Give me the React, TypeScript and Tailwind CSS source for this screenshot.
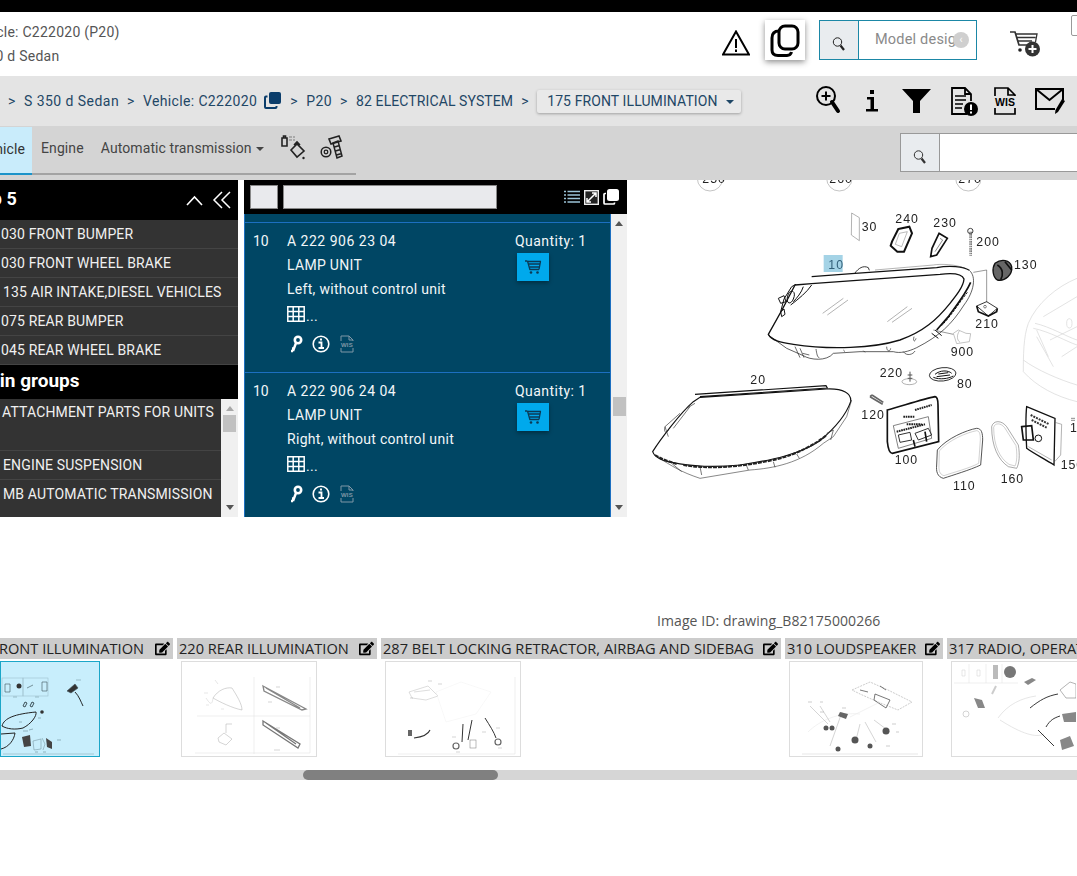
import React from "react";
import { FaEdit } from "react-icons/fa";

const Mag = ({ c = "#222" }: { c?: string }) => (
  <svg width="14" height="16" viewBox="0 0 14 16" fill="none">
    <circle cx="5.5" cy="6" r="4.2" stroke={c} strokeWidth="1" />
    <path d="M8.5 9.5 L12 14" stroke={c} strokeWidth="2.2" />
  </svg>
);

const Cart = () => (
  <svg width="18" height="16" viewBox="0 0 18 16" fill="none" stroke="#0b3a55">
    <path d="M1 2h2.5M4 2.5h13M4.5 5h11.5M5.5 8h10M6 10.5h9" strokeWidth="1.3" />
    <path d="M3.5 2l2.5 9M16.5 2.5l-1.5 8" strokeWidth="1.3" />
    <circle cx="7" cy="13.5" r="1.3" fill="#0b3a55" stroke="none" />
    <circle cx="13.5" cy="13.5" r="1.3" fill="#0b3a55" stroke="none" />
  </svg>
);

const SmallWis = () => (
  <svg width="14" height="18" viewBox="0 0 14 18" fill="none" stroke="#7f97a6" strokeWidth="1">
    <path d="M1 6V1h8l4 4v1M1 13v4h12v-4M9 1v4h4" />
    <text x="7" y="12" textAnchor="middle" fill="#7f97a6" stroke="none" fontSize="6" fontWeight="700" fontFamily="Liberation Sans, sans-serif">WIS</text>
  </svg>
);

const PartCard = ({ no, name, side }: { no: string; name: string; side: string }) => (
  <div className="h-[150px] border-t border-[#1c6fc0] flex text-[14px] text-[#f2f6f8] leading-[24px] pt-[6px]">
    <div className="w-[42px] pl-[8px]">10</div>
    <div className="w-[228px] tracking-[0.3px]">
      <div className="tracking-[0.5px]">{no}</div>
      <div>{name}</div>
      <div>{side}</div>
      <div className="flex items-center h-[26px] gap-[1px]">
        <svg width="18" height="16" viewBox="0 0 18 16" fill="none" stroke="#fff" strokeWidth="1.5">
          <path d="M.8.8h16.400v14.400H.8zM.8 5.500h16.400M.8 10.500h16.400M6.200.8v14.400M11.800.8v14.400" />
        </svg>
        <span className="leading-[14px] mt-[4px]">...</span>
      </div>
      <div className="flex items-center gap-[9px] mt-[5px] ml-[3px] h-[24px]">
        <svg width="13" height="18" viewBox="0 0 13 18" fill="none" stroke="#fff">
          <circle cx="8" cy="5" r="3.200" strokeWidth="2.600" />
          <path d="M6 8 L3 16 M3 16h-2M4 13.500h-2" strokeWidth="2.400" />
        </svg>
        <svg width="18" height="18" viewBox="0 0 18 18" fill="none" stroke="#fff">
          <circle cx="9" cy="9" r="7.800" strokeWidth="1.600" />
          <path d="M6.500 7.500h3v5M6.500 13h5.500M8 4.500h2" strokeWidth="1.800" />
        </svg>
        <span className="ml-[1px]"><SmallWis /></span>
      </div>
    </div>
    <div className="flex-1 tracking-[0.45px]">
      <div>Quantity: 1</div>
      <div className="w-[32px] h-[28px] ml-[2px] bg-[#00a9ec] flex items-center justify-center shadow-[0_2px_4px_rgba(0,0,0,0.35)]">
        <Cart />
      </div>
    </div>
  </div>
);

const Label = ({ text, w }: { text: string; w: string }) => (
  <div className={`${w} h-[21px] shrink-0 bg-[#cccccc] flex items-center justify-between pl-[2px] pr-[3px] text-[#222] text-[14.6px] whitespace-nowrap overflow-hidden`}>
    <span>{text}</span>
    <FaEdit className="w-[15px] h-[15px] shrink-0 ml-[8px] text-black" />
  </div>
);

const Row = ({ t, m, h = "h-[29px] pt-[4px]" }: { t: string; m: string; h?: string }) => (
  <div className={`${h} border-b border-[#444] flex items-start text-[14px] leading-[20px] text-[#f0f0f0] whitespace-nowrap tracking-[0.15px]`}>
    <span className={m}>{t}</span>
  </div>
);

const Diagram = () => (
  <svg width="437" height="340" viewBox="0 0 1311 1020" fill="none" stroke="#111" className="block blur-[0.3px]">
    <g stroke="#888" strokeWidth="1.5">
      <circle cx="210" cy="-5" r="38" />
      <circle cx="598" cy="-5" r="38" />
      <circle cx="985" cy="-5" r="38" />
    </g>
    <rect x="551" y="225" width="57" height="51" fill="#a4d3e6" stroke="none" />
    <g stroke="#d4d4d4" strokeWidth="2">
      <path d="M1311 295 C1250 320 1190 370 1165 430 C1150 470 1150 530 1150 575 C1190 620 1250 650 1311 665" />
      <path d="M1185 430 C1230 440 1280 470 1311 480 M1180 445 C1230 455 1280 485 1311 495 M1190 470 L1240 560 M1150 540 C1190 570 1260 600 1311 615 M1230 480 L1311 440 M1265 530 L1311 500 M1210 410 L1311 350 M1190 450 L1225 530" />
      <ellipse cx="1288" cy="430" rx="8" ry="14" />
    </g>
    {/* lamp 10, drawn in crop coordinates */}
    <g transform="translate(360 75)">
      <path d="M155 215 L285 205 L530 188 C570 180 610 185 628 196" strokeWidth="3.500" />
      <path d="M285 204 C295 190 310 180 325 188 L328 196" strokeWidth="2.500" />
      <path d="M345 195 L520 180 C540 176 590 178 615 190" strokeWidth="1.200" stroke="#444" />
      <path d="M105 240 L155 236 L540 208 C580 203 606 206 612 222 C610 245 590 270 570 295 C530 345 490 380 420 405 C340 430 210 435 100 418 C70 413 35 408 25 388 C50 345 80 290 105 240Z" strokeWidth="4" />
      <path d="M628 196 C650 215 642 260 612 300 C575 358 540 392 470 428 C445 440 420 446 400 440 L300 440 L220 445 C200 470 150 465 130 452 L80 430 L25 390" strokeWidth="2" />
      <path d="M108 238 L95 245 L72 282 L62 320 M88 262 C100 252 108 265 100 282 C95 295 85 298 82 288 C80 278 84 268 88 262Z M155 240 C140 262 118 280 92 300 M130 245 C125 262 110 280 100 290" strokeWidth="3" />
      <path d="M55 280 L72 272 L78 290 L62 295Z M62 320 L72 312 L75 328 L65 335Z" strokeWidth="3" />
      <path d="M188 325 L250 280 M202 330 L264 285 M382 350 L442 305 M396 352 L456 310" stroke="#666" strokeWidth="1.500" />
      <path d="M632 232 C615 270 590 300 565 335 L530 375" strokeWidth="5" />
      <path d="M622 262 C600 290 575 330 545 362" strokeWidth="3" strokeDasharray="8 3" />
      <path d="M525 375 L545 392 M515 385 L535 400" strokeWidth="3" />
      <path d="M168 432 C170 445 172 458 178 458 M250 435 L255 440 M310 437 L315 442 M380 425 C380 440 390 442 392 430 M462 395 C458 410 465 412 468 400 M430 440 C440 455 460 448 465 438 M105 425 L120 458 M120 430 L132 458 M128 445 L148 450" strokeWidth="2" stroke="#222" />
      <path d="M640 202 L680 195 L680 292 M520 375 L580 388" strokeWidth="1.500" stroke="#333" />
      <path d="M275 24 L298 38 V107 L274 90Z" stroke="#666" strokeWidth="1.500" />
      <path d="M415 72 L448 65 L456 85 L432 140 L412 140 L392 122 L396 110Z" strokeWidth="6" />
      <path d="M418 85 L442 80 L425 125 L406 118Z" stroke="#777" strokeWidth="1.500" />
      <path d="M537 85 L562 100 L530 150 L512 155 L516 130Z" strokeWidth="5" />
      <path d="M540 100 L548 105 L525 140" stroke="#555" strokeWidth="2" />
      <path d="M632 80 V152" strokeWidth="7" stroke="#555" strokeDasharray="5 2" />
      <path d="M632 80 V152" strokeWidth="1.500" stroke="#fff" />
      <circle cx="631" cy="78" r="8" strokeWidth="3" stroke="#444" />
      <path d="M705 175 C725 160 750 165 755 185 C758 210 735 230 712 225 C698 215 695 190 705 175Z" strokeWidth="4" fill="#666" />
      <path d="M712 180 C730 190 730 212 722 224 M735 170 L755 195" strokeWidth="5" />
      <path d="M650 303 L680 290 L712 310 L685 333 Z" strokeWidth="2.500" />
      <path d="M650 303 L655 320 L685 333 L710 320 L712 310" strokeWidth="5" />
      <circle cx="675" cy="305" r="4" strokeWidth="1.500" />
      <path d="M580 385 L595 375 L618 385 L632 386 L628 410 L590 416Z M598 378 C590 390 590 405 600 412" stroke="#888" strokeWidth="1.500" />
    </g>
    <path d="M810 575 V605 M803 585 H817 M803 595 H817" strokeWidth="3" stroke="#555" />
    <ellipse cx="808" cy="605" rx="22" ry="9" stroke="#666" strokeWidth="1.500" />
    <ellipse cx="908" cy="583" rx="40" ry="20" strokeWidth="2.500" transform="rotate(-6 908 583)" />
    <path d="M885 583 C900 570 925 570 935 580 M880 592 C900 600 925 596 940 588 M895 582 L925 578 M890 590 L930 585" strokeWidth="3" />
    {/* lamp 20 */}
    <g>
      <path d="M165 643 L558 617 L562 624 L180 650" strokeWidth="3.500" />
      <path d="M38 815 C60 780 120 700 160 665 L180 652 L560 627 C610 625 635 640 632 665 C620 700 590 740 540 782 C480 822 400 840 300 855 C230 862 150 860 100 848 C70 842 45 835 38 815Z" strokeWidth="3.500" />
      <path d="M45 825 C60 835 80 842 110 852 M130 855 C200 868 300 862 400 840 C470 825 530 790 560 765" strokeWidth="6" strokeDasharray="12 3" stroke="#222" />
      <path d="M50 830 C100 860 120 875 180 895 L330 870 C400 865 480 850 550 790 L580 770 L620 710 L635 660" strokeWidth="1.500" />
      <path d="M75 740 L85 770 M120 700 L75 740 M150 680 L100 745 M140 685 L165 670 M560 760 L580 750 L572 780 M400 845 L405 862 M470 822 L478 835 M320 858 L325 870 M180 860 L185 885 M95 850 L125 875 M75 740 C70 760 80 760 85 750" strokeWidth="2" stroke="#333" />
    </g>
    {/* units, in crop coordinates */}
    <g transform="translate(660 615)">
      <path d="M30 35 L68 58 M36 30 L70 52 M30 35 L36 30" strokeWidth="5" stroke="#666" />
      <path d="M82 75 C120 65 190 42 225 35 C232 36 234 45 234 60 L236 170 L97 205 C88 205 84 190 82 170Z" strokeWidth="5" fill="#fff" />
      <path d="M100 122 L205 95 L215 160 L115 190Z" stroke="#444" strokeWidth="2" />
      <path d="M130 95 H165 M140 118 H185 M165 75 L215 60 M110 140 L195 118" strokeWidth="6" stroke="#222" strokeDasharray="5 2" />
      <path d="M115 150 L150 142 L155 165 L120 172Z M165 145 L205 130 L215 150 L175 165Z" strokeWidth="3" stroke="#333" />
      <path d="M160 165 L165 185 M195 140 L200 170" strokeWidth="5" />
      <path d="M232 195 C260 160 320 135 350 130 C365 130 368 145 368 165 L362 240 C330 255 280 270 250 280 C232 275 228 260 230 240Z" strokeWidth="2.500" stroke="#333" />
      <path d="M238 198 C265 165 322 142 350 137 C360 138 361 150 361 165 L356 235 C328 250 280 262 252 272 C238 268 236 255 237 240Z" strokeWidth="1" stroke="#777" />
      <path d="M395 125 C400 105 425 105 440 125 L475 180 C480 210 478 235 470 250 L445 245 C415 225 395 185 395 125Z" stroke="#555" strokeWidth="1.500" />
      <path d="M401 127 C405 113 422 113 434 128 L468 182 C472 208 471 230 465 243 L447 238 C420 220 401 183 401 127Z" stroke="#888" strokeWidth="1.200" />
      <path d="M500 65 L585 100 L582 240 C550 220 520 205 500 190 C498 150 496 100 500 65Z" strokeWidth="4" fill="#fff" />
      <path d="M585 112 L605 118 L602 210 L584 230" stroke="#666" strokeWidth="1.500" />
      <path d="M512 90 L568 118 M515 105 L560 128" strokeWidth="6" strokeDasharray="6 3" stroke="#333" />
      <path d="M485 125 L515 122 L520 165 L490 165Z" strokeWidth="5" />
      <circle cx="535" cy="160" r="10" strokeWidth="3" />
      <path d="M505 185 L575 225" stroke="#666" strokeWidth="1.500" />
      <path d="M633 100 H645 M633 106 H645" stroke="#555" strokeWidth="2" />
    </g>
    <g fill="#222" stroke="none" fontFamily="'Liberation Sans', sans-serif" fontSize="37" letterSpacing="3">
      <text x="665" y="152">30</text>
      <text x="766" y="128">240</text>
      <text x="880" y="140">230</text>
      <text x="1009" y="198">200</text>
      <text x="1122" y="266">130</text>
      <text x="565" y="267" fill="#33617a">10</text>
      <text x="1006" y="443">210</text>
      <text x="932" y="527">900</text>
      <text x="331" y="613">20</text>
      <text x="719" y="592">220</text>
      <text x="951" y="623">80</text>
      <text x="664" y="717">120</text>
      <text x="764" y="851">100</text>
      <text x="939" y="930">110</text>
      <text x="1082" y="908">160</text>
      <text x="1262" y="866">150</text>
      <text x="1290" y="757">1</text>
      <text x="187" y="8">250</text>
      <text x="568" y="8">260</text>
      <text x="955" y="8">270</text>
    </g>
  </svg>
);

const Thumb1 = () => (
  <svg width="98" height="94" viewBox="0 0 98 94" fill="none" stroke="#3c5058" strokeWidth="0.6" className="block blur-[0.3px]">
    <rect x="1" y="16" width="21" height="18" stroke="#9fc0cc" />
    <rect x="22" y="16" width="25" height="18" stroke="#9fc0cc" />
    <path d="M4 22h5v8H4zM26 26l6-3M41 20h5v9h-5z" />
    <circle cx="18" cy="24" r="2.500" fill="#333" stroke="none" />
    <path d="M66 29 L74 22 L77 26 L70 31Z" fill="#333" />
    <path d="M74 30 C78 34 80 40 82 44" stroke="#111" strokeWidth="0.9" />
    <path d="M75 18h5M12 35h4M34 35h4" stroke="#7a9aa6" />
    <path d="M1 64 C3 56 14 52 35 50 C36 54 30 62 22 66 C14 68 6 67 1 64Z" strokeWidth="1" stroke="#222" />
    <path d="M22 44l2-4 2 1-2 4zM29 44l2-4 2 1-2 4z" strokeWidth="1" />
    <circle cx="41" cy="50" r="1.800" fill="#333" stroke="none" />
    <path d="M0 72 L14 71 C13 78 8 85 0 87" strokeWidth="1" stroke="#222" />
    <path d="M21 75 L29 73 L30 84 L23 85Z" fill="#444" stroke="none" />
    <path d="M45 76 L51 80 L51 87 L46 85Z" fill="#444" stroke="none" />
    <path d="M32 79 L40 77 L40 87 L33 88Z M41 76 L44 82 L42 88" stroke="#7a9aa6" />
    <path d="M22 69h5M28 68l4-1M18 60h3M37 56h3M56 78h4M34 90h3M42 90h3" stroke="#6a8a96" />
    <path d="M2 92 H93" stroke="#8fb0bb" strokeWidth="0.600" />
  </svg>
);

const Thumb2 = () => (
  <svg width="134" height="94" viewBox="0 0 134 94" fill="none" stroke="#888" strokeWidth="0.5" className="block blur-[0.3px]">
    <path d="M72 15 V92 M15 54 H128 M13 91 H128 M128 15 V91" stroke="#ddd" />
    <path d="M31 36 C36 28 44 25 50 26 C55 34 60 42 60 48 C50 46 38 40 31 36Z" stroke="#aaa" />
    <path d="M24 36 C28 42 30 44 31 36M33 18 l3 4M22 31h4M24 43h3M39 47h3" stroke="#ccc" />
    <path d="M81 24 L124 47 L120 48 L82 29Z M84 26 L118 46" strokeWidth="1.300" stroke="#888" />
    <path d="M81 59 L118 82 L116 86 L81 63Z M84 61 L114 82" strokeWidth="1.300" stroke="#777" />
    <path d="M36 76 L42 71 L50 77 L44 83 L37 80Z M44 62 V71 M44 62 h6" stroke="#aaa" />
    <path d="M94 25h4M86 40h4M94 66h4M92 88h6" stroke="#aaa" />
  </svg>
);

const Thumb3 = () => (
  <svg width="134" height="94" viewBox="0 0 134 94" fill="none" stroke="#888" strokeWidth="0.5" className="block blur-[0.3px]">
    <path d="M12 92 H129 M129 15 V92" stroke="#ddd" />
    <path d="M23 30 L42 24 L52 34 L40 38 L26 36Z M28 30 L44 28" stroke="#bbb" />
    <path d="M42 19h4M52 22h4M24 36h3" stroke="#aaa" />
    <path d="M50 30 L75 20 L105 30 L90 52 L60 60Z" stroke="#f0f0f0" />
    <rect x="22" y="68" width="4" height="6" fill="#666" stroke="none" />
    <path d="M28 76 C36 75 42 73 44 68" stroke="#333" strokeWidth="1.100" />
    <path d="M77 62 L76 80 M86 58 L82 78 M99 56 C104 64 108 70 110 76" stroke="#333" strokeWidth="1" />
    <circle cx="70" cy="84" r="3" stroke="#666" strokeWidth="1.200" />
    <rect x="84" y="78" width="6" height="8" stroke="#777" />
    <circle cx="112" cy="80" r="3" stroke="#666" strokeWidth="1.200" />
    <path d="M66 75h4M96 70h4M110 66h4M112 86h4M70 90h4" stroke="#aaa" />
  </svg>
);

const Thumb4 = () => (
  <svg width="132" height="94" viewBox="0 0 132 94" fill="none" stroke="#777" strokeWidth="0.5" className="block blur-[0.3px]">
    <path d="M12 92 H128" stroke="#ccc" />
    <path d="M62 28 L80 20 L98 28 L122 40 L108 48 L88 40 L70 32Z" stroke="#999" strokeDasharray="2 1" />
    <path d="M85 32 L100 38 L96 46 L84 38Z M70 28 L78 30 M90 24 L96 28" stroke="#555" strokeWidth="0.800" />
    <path d="M18 70 C30 58 50 50 70 52 M90 40 L60 55" stroke="#e4e4e4" />
    <path d="M20 44 L38 62 M30 44 L40 60 M52 50 L40 84 M70 62 L66 78 M75 60 L86 80 M100 70 L84 58" stroke="#aaa" />
    <circle cx="36" cy="66" r="2.500" fill="#555" stroke="none" />
    <circle cx="42" cy="66" r="2.500" fill="#555" stroke="none" />
    <circle cx="65" cy="78" r="3.500" fill="#555" stroke="none" />
    <circle cx="80" cy="84" r="2.500" fill="#555" stroke="none" />
    <circle cx="48" cy="87" r="2.500" fill="#555" stroke="none" />
    <circle cx="96" cy="69" r="3.500" fill="#555" stroke="none" />
    <path d="M50 50 L58 52 L56 57 L48 54Z" fill="#666" stroke="none" />
    <path d="M18 40h4M30 40h3M102 62h4M106 70h3M30 50h4M52 46h4M96 84h4" stroke="#999" />
  </svg>
);

const Thumb5 = () => (
  <svg width="124" height="94" viewBox="0 0 124 94" fill="none" stroke="#888" strokeWidth="0.5" className="block blur-[0.3px]">
    <path d="M2 21 H66 M17 2 V21 M34 2 V21 M50 2 V21" stroke="#ddd" />
    <path d="M10 8h3v6h-3zM25 8h3v6h-3z" stroke="#ccc" />
    <rect x="41" y="3" width="5" height="14" fill="#bbb" stroke="none" />
    <circle cx="58" cy="10" r="6" fill="#777" stroke="none" />
    <path d="M22 36 L30 38 L33 46 L26 46Z" fill="#888" stroke="none" />
    <circle cx="14" cy="52" r="3" stroke="#aaa" />
    <path d="M46 56 C56 42 70 36 84 34 M48 58 C70 72 84 76 92 72" stroke="#ccc" />
    <path d="M78 46 C88 38 95 34 106 32" stroke="#222" strokeWidth="0.900" />
    <path d="M108 28 L118 20 L124 22 L124 36 L114 36Z" stroke="#666" />
    <path d="M94 65 C98 58 102 56 108 54" stroke="#222" strokeWidth="0.900" />
    <path d="M86 68 L102 84" stroke="#222" strokeWidth="0.900" />
    <path d="M110 52 L124 50 V60 L112 60Z" fill="#888" stroke="none" />
    <path d="M108 78 L118 74 L122 84 L110 88Z" fill="#888" stroke="none" />
    <path d="M72 20 L80 16 L84 18 L76 23Z" fill="#888" stroke="none" />
    <path d="M40 32 l4 -8" stroke="#ccc" strokeWidth="2" />
  </svg>
);

export default function App() {
  return (
    <div className="w-[1077px] h-[876px] overflow-hidden bg-white flex flex-col font-['Roboto',sans-serif]">
      <div className="h-[12px] bg-black shrink-0" />
      {/* header */}
      <div className="h-[64px] shrink-0 flex bg-white overflow-hidden">
        <div className="w-[722px] shrink-0 pt-[8px] text-[14px] leading-[24px] text-[#555] whitespace-nowrap tracking-[0.25px] overflow-hidden">
          <div className="-ml-[32px]">Vehicle: C222020 (P20)</div>
          <div className="-ml-[33px]">S 350 d Sedan</div>
        </div>
        <svg width="28" height="26" viewBox="0 0 28 26" fill="none" className="mt-[18px] shrink-0">
          <path d="M14 1.500 L27 24.500 H1Z" stroke="#000" strokeWidth="2" strokeLinejoin="miter" />
          <path d="M14 9 V18 M14 19.500 V22" stroke="#000" strokeWidth="2" />
        </svg>
        <div className="ml-[15px] mt-[8px] w-[40px] h-[40px] shrink-0 bg-white shadow-[0_2px_6px_rgba(0,0,0,0.45)] flex items-center justify-center">
          <svg width="30" height="33" viewBox="0 0 30 33" fill="none" stroke="#000" strokeWidth="3">
            <rect x="9" y="2" width="19" height="23" rx="6" />
            <path d="M9 7 C4 7 2 10 2 14 V26 C2 30 4 31.500 8 31.500 H17 C20 31.500 21 30 21.500 28" />
          </svg>
        </div>
        <div className="ml-[14px] mt-[8px] w-[158px] h-[40px] shrink-0 border border-[#1b87a6] flex items-stretch">
          <div className="w-[39px] border-r border-[#1b87a6] bg-[#e9ecef] flex items-center justify-center pt-[8px]"><Mag /></div>
          <div className="flex-1 relative overflow-hidden pl-[16px] flex items-center text-[14.5px] text-[#8a8a8a] whitespace-nowrap tracking-[0.2px]">
            Model desig
            <span className="absolute left-[94px] top-[11px] w-[16px] h-[16px] rounded-full bg-[#cfcfcf] flex items-center justify-center text-white text-[10px] leading-none">‹</span>
          </div>
        </div>
        <svg width="31" height="26" viewBox="0 0 31 26" fill="none" className="ml-[33px] mt-[19px] shrink-0" stroke="#333">
          <path d="M0 1h5l4 13h12" strokeWidth="1.700" />
          <path d="M5 3h22l-1.500 8M6.500 6.500h19M8 10h14" strokeWidth="1.300" />
          <circle cx="10" cy="19" r="1.800" fill="#222" stroke="none" />
          <circle cx="22.500" cy="18" r="7.500" fill="#333" stroke="none" />
          <path d="M22.500 14v8M18.500 18h8" stroke="#fff" strokeWidth="2" />
        </svg>
        <div className="ml-[30px] mt-[3px] w-[12px] h-[21px] shrink-0 border border-[#999] rounded-[2px] bg-white" />
      </div>
      {/* breadcrumb */}
      <div className="h-[50px] shrink-0 bg-[#e4e4e4] flex items-center text-[14px] text-[#1f4766] whitespace-nowrap tracking-[0.45px]">
        <span className="ml-[8px] w-[16px]">&gt;</span>
        <span>S 350 d Sedan</span>
        <span className="ml-[8px] w-[16px]">&gt;</span>
        <span className="tracking-[0.35px]">Vehicle: C222020</span>
        <svg width="17" height="17" viewBox="0 0 17 17" className="ml-[7px] mb-[1px] shrink-0">
          <rect x="5" y="0" width="12" height="12" rx="2" fill="#0b3d6b" />
          <path d="M3.500 4.500 H2 A1 1 0 0 0 1 5.500 V15 A1 1 0 0 0 2 16 H11.500 A1 1 0 0 0 12.500 15 V14" fill="none" stroke="#0b3d6b" strokeWidth="2" />
        </svg>
        <span className="ml-[9px] w-[16px]">&gt;</span>
        <span>P20</span>
        <span className="ml-[8px] w-[16px]">&gt;</span>
        <span className="tracking-[0.1px]">82 ELECTRICAL SYSTEM</span>
        <span className="ml-[8px] w-[16px]">&gt;</span>
        <div className="h-[23px] w-[204px] shrink-0 bg-[#e9e9e9] rounded-[2px] shadow-[0_1px_3px_rgba(0,0,0,0.3)] flex items-center pl-[10px] mt-[1px] tracking-[0.1px]">
          <span>175 FRONT ILLUMINATION</span>
          <span className="ml-[8px] border-x-[4px] border-x-transparent border-t-[4px] border-t-[#1f4766]" />
        </div>
        <svg width="26" height="30" viewBox="0 0 26 30" fill="none" stroke="#000" className="ml-[74px] mb-[2px] shrink-0">
          <circle cx="11" cy="11" r="9" strokeWidth="2" />
          <path d="M11 6.500v9M6.500 11h9" strokeWidth="2" />
          <path d="M17 17 L23 26" strokeWidth="4" strokeLinecap="round" />
        </svg>
        <svg width="12" height="22" viewBox="0 0 12 22" fill="#000" className="ml-[25px] shrink-0">
          <rect x="4" y="0" width="4" height="4" />
          <path d="M1 7h7v12h4v2.500H0V19h4.500V9.500H1Z" />
        </svg>
        <svg width="29" height="25" viewBox="0 0 29 25" fill="#000" className="ml-[24px] shrink-0">
          <path d="M0 0h29L18 12v12h-7V12Z" />
        </svg>
        <svg width="27" height="29" viewBox="0 0 27 29" fill="none" stroke="#000" className="ml-[20px] shrink-0">
          <path d="M16 27H1V1h13l6 6v7M14 1v6h6" strokeWidth="1.800" />
          <path d="M4 9h11M4 13h11M4 17h8M4 21h7" strokeWidth="1.500" />
          <circle cx="20" cy="22" r="7" fill="#000" stroke="none" />
          <path d="M20 17.500v5.500M20 24.500v2" stroke="#fff" strokeWidth="2" />
        </svg>
        <svg width="22" height="28" viewBox="0 0 22 28" fill="none" stroke="#000" strokeWidth="1.700" className="ml-[16px] shrink-0">
          <path d="M1 9V1h13l7 7v1M14 1v7h7M1 21v6h20v-6" />
          <text x="11" y="19" textAnchor="middle" fill="#000" stroke="none" fontSize="10.500" fontWeight="700" letterSpacing="0" fontFamily="'Liberation Sans', sans-serif">WIS</text>
        </svg>
        <svg width="31" height="28" viewBox="0 0 31 28" fill="none" stroke="#000" className="ml-[19px] shrink-0">
          <path d="M28 13V2H1v20h19" strokeWidth="2" />
          <path d="M1 2 L14.500 13 L28 2" strokeWidth="2" />
          <path d="M30 14 L23 25 L20 27 L20.500 23 L27 12Z" fill="#000" stroke="none" />
        </svg>
      </div>
      {/* tabs */}
      <div className="h-[54px] shrink-0 bg-[#d4d4d4] flex text-[14px] text-[#444] whitespace-nowrap tracking-[0.1px] overflow-hidden">
        <div className="w-[356px] h-[49px] shrink-0 flex items-stretch border-b-2 border-[#a3a3a3] pb-[2px]">
          <div className="w-[32px] overflow-hidden mt-[1px] -mb-[4px] h-[48px] bg-[#c9ecfb] border-b-2 border-[#1b93c9] flex items-center justify-end text-[#333] pr-[7px] pb-[2px]">Vehicle</div>
          <div className="ml-[9px] flex items-center">Engine</div>
          <div className="ml-[17px] flex items-center">
            Automatic transmission
            <span className="ml-[4px] border-x-[4px] border-x-transparent border-t-[4px] border-t-[#444]" />
          </div>
          <svg width="26" height="25" viewBox="0 0 26 25" fill="none" stroke="#222" strokeWidth="1.300" className="ml-[16px] mt-[9px]">
            <path d="M2 3h5v8H2zM3.500 3V1h2v2" strokeWidth="1.600" />
            <path d="M9 2h3M9 5h3M13 2h2M13 5h2" stroke="#999" />
            <path d="M11 15 L17 9 L24 16 L17 22Z M14 10 l3 -3 l3 3" strokeWidth="1.600" />
            <circle cx="23.500" cy="23" r="1.200" fill="#222" stroke="none" />
          </svg>
          <svg width="24" height="25" viewBox="0 0 24 25" fill="none" stroke="#222" className="ml-[14px] mt-[9px]">
            <circle cx="6" cy="17" r="4.800" strokeWidth="1.500" />
            <circle cx="6" cy="17" r="1.800" strokeWidth="1.300" />
            <path d="M9 4 L19 1 L21 6 L11 9Z" strokeWidth="1.600" />
            <path d="M13 8 L18 6 L22 21 L17 23Z M14.500 12 l5 -1.500 M15.500 16 l5 -1.500 M16.500 20 l5 -1.500" strokeWidth="1.500" />
          </svg>
        </div>
        <div className="ml-[544px] mt-[7px] w-[190px] h-[39px] shrink-0 border border-[#999] flex bg-white">
          <div className="w-[39px] border-r border-[#999] bg-[#e9ecef] flex items-center justify-center pt-[8px]"><Mag c="#333" /></div>
        </div>
      </div>
      {/* main */}
      <div className="h-[340px] shrink-0 flex">
        <div className="w-[238px] h-[337px] shrink-0 flex flex-col bg-[#333] overflow-hidden">
          <div className="h-[40px] bg-black flex items-center justify-between text-white pr-[6px] whitespace-nowrap">
            <span className="font-bold text-[18px] -ml-[28px] -mt-[3px]">Top 5</span>
            <span className="flex items-center gap-[9px]">
              <svg width="17" height="11" viewBox="0 0 17 11" fill="none" stroke="#fff" strokeWidth="1.600"><path d="M1 10 L8.500 2 L16 10" /></svg>
              <svg width="20" height="18" viewBox="0 0 20 18" fill="none" stroke="#fff" strokeWidth="1.500"><path d="M10 1 L2 9 L10 17M18 1 L10 9 L18 17" /></svg>
            </span>
          </div>
          <Row t="030 FRONT BUMPER" m="ml-[1px]" />
          <Row t="030 FRONT WHEEL BRAKE" m="ml-[1px]" />
          <Row t="135 AIR INTAKE,DIESEL VEHICLES" m="ml-[3px]" />
          <Row t="075 REAR BUMPER" m="ml-[1px]" />
          <Row t="045 REAR WHEEL BRAKE" m="ml-[1px]" />
          <div className="h-[34px] bg-black text-white font-bold text-[19px] leading-[32px] whitespace-nowrap overflow-hidden">
            <span className="block -ml-[27px]">Main groups</span>
          </div>
          <div className="flex-1 flex overflow-hidden">
            <div className="w-[221px] overflow-hidden">
              <Row t="ATTACHMENT PARTS FOR UNITS" m="ml-[2px]" h="h-[52px] pt-[3px]" />
              <Row t="ENGINE SUSPENSION" m="ml-[3px]" />
              <Row t="MB AUTOMATIC TRANSMISSION" m="ml-[3px]" h="h-[38px] pt-[4px] !border-b-0" />
            </div>
            <div className="w-[17px] bg-[#f0f0f0] flex flex-col items-center">
              <span className="mt-[7px] border-x-[4px] border-x-transparent border-b-[5px] border-b-[#a8a8a8]" />
              <span className="mt-[4px] w-[13px] h-[17px] bg-[#c1c1c1]" />
              <span className="mt-auto mb-[7px] border-x-[4px] border-x-transparent border-t-[5px] border-t-[#555]" />
            </div>
          </div>
        </div>
        <div className="ml-[6px] w-[383px] h-[337px] shrink-0 flex flex-col">
          <div className="h-[34px] bg-black flex items-center pl-[6px] gap-[5px]">
            <div className="w-[28px] h-[24px] bg-[#e9eaed] border border-[#888]" />
            <div className="w-[214px] h-[24px] bg-[#e9eaed] border border-[#888]" />
            <svg width="16" height="14" viewBox="0 0 16 14" fill="none" stroke="#9cc4d8" strokeWidth="1.400" className="ml-[62px]">
              <path d="M3.500 1.500H16M3.500 5H16M3.500 8.500H16M3.500 12H16M0 1.500h2M0 5h2M0 8.500h2M0 12h2" />
            </svg>
            <svg width="15" height="15" viewBox="0 0 15 15" className="-ml-[1px]">
              <rect x="0.700" y="0.700" width="13.600" height="13.600" fill="#222" stroke="#eee" strokeWidth="1.400" />
              <path d="M3 12 L12 3 M8 3h4v4M3 8v4h4" stroke="#fff" strokeWidth="1.500" fill="none" />
            </svg>
            <svg width="16" height="16" viewBox="0 0 16 16" className="ml-[-1px]">
              <rect x="4" y="0" width="12" height="12" rx="2.500" fill="#fff" />
              <path d="M3 4.500H2A1 1 0 0 0 1 5.500V14A1 1 0 0 0 2 15H10.500A1 1 0 0 0 11.500 14V13.500" stroke="#fff" strokeWidth="1.700" fill="none" />
            </svg>
          </div>
          <div className="flex-1 flex overflow-hidden">
            <div className="w-[367px] bg-[#004664] border-x border-[#1c6fc0] pt-[8px] overflow-hidden">
              <PartCard no="A 222 906 23 04" name="LAMP UNIT" side="Left, without control unit" />
              <PartCard no="A 222 906 24 04" name="LAMP UNIT" side="Right, without control unit" />
            </div>
            <div className="w-[16px] bg-[#f0f0f0] flex flex-col items-center">
              <span className="mt-[7px] border-x-[4px] border-x-transparent border-b-[5px] border-b-[#555]" />
              <span className="mt-[171px] w-[13px] h-[19px] bg-[#c1c1c1]" />
              <span className="mt-auto mb-[7px] border-x-[4px] border-x-transparent border-t-[5px] border-t-[#555]" />
            </div>
          </div>
        </div>
        <div className="ml-[13px] overflow-hidden">
          <Diagram />
        </div>
      </div>
      {/* image id */}
      <div className="h-[118px] shrink-0 flex flex-col">
        <div className="mt-[91px] ml-[657px] text-[14px] leading-[20px] text-[#555] font-['Open_Sans',sans-serif] tracking-[0.08px] whitespace-nowrap">
          Image ID: drawing_B82175000266
        </div>
      </div>
      {/* thumbnails */}
      <div className="flex font-['Open_Sans',sans-serif]">
        <div className="shrink-0 w-[173px] overflow-hidden flex flex-col">
          <div className="h-[21px] bg-[#ccc] flex items-center justify-between pr-[3px] text-[14.6px] text-[#222] whitespace-nowrap overflow-hidden">
            <span className="-ml-[1px]">RONT ILLUMINATION</span>
            <FaEdit className="w-[15px] h-[15px] text-black" />
          </div>
          <div className="mt-[2px] w-[100px] h-[96px] bg-[#c8eefc] border border-[#1ba6c8] box-border"><Thumb1 /></div>
        </div>
        <div className="shrink-0 ml-[4px] w-[200px] flex flex-col">
          <Label text="220 REAR ILLUMINATION" w="w-[200px]" />
          <div className="mt-[2px] ml-[4px] w-[136px] h-[96px] border border-[#ddd]"><Thumb2 /></div>
        </div>
        <div className="shrink-0 ml-[4px] w-[400px] flex flex-col">
          <Label text="287 BELT LOCKING RETRACTOR, AIRBAG AND SIDEBAG" w="w-[400px]" />
          <div className="mt-[2px] ml-[4px] w-[136px] h-[96px] border border-[#ddd]"><Thumb3 /></div>
        </div>
        <div className="shrink-0 ml-[4px] w-[158px] flex flex-col">
          <Label text="310 LOUDSPEAKER" w="w-[158px]" />
          <div className="mt-[2px] ml-[4px] w-[134px] h-[96px] border border-[#ddd]"><Thumb4 /></div>
        </div>
        <div className="shrink-0 ml-[4px] w-[200px] flex flex-col">
          <Label text="317 RADIO, OPERATING UNIT" w="w-[200px]" />
          <div className="mt-[2px] ml-[4px] w-[140px] h-[96px] border border-[#ddd]"><Thumb5 /></div>
        </div>
      </div>
      <div className="mt-[13px] h-[10px] w-full shrink-0 bg-[#d6d6d6] pl-[303px]">
        <div className="w-[195px] h-[10px] rounded-[5px] bg-[#808080]" />
      </div>
    </div>
  );
}
